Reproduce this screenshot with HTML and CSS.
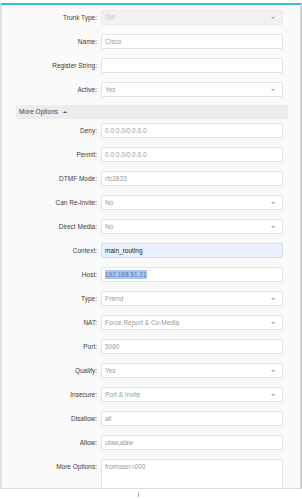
FILE: index.html
```html
<!DOCTYPE html>
<html lang="en">
<head>
    <meta charset="UTF-8">
    <meta name="viewport" content="width=device-width, initial-scale=1.0">
    <title>Edit Trunk</title>
    <link rel="stylesheet" href="styles.css">
</head>
<body>
    <div class="modal">
        <div class="modal-body">
            <div class="row">
                <label>Trunk Type:</label>
                <div class="field select disabled"><span>SIP</span><i class="caret"></i></div>
            </div>
            <div class="row">
                <label>Name:</label>
                <div class="field"><span>Cisco</span></div>
            </div>
            <div class="row">
                <label>Register String:</label>
                <div class="field"></div>
            </div>
            <div class="row">
                <label>Active:</label>
                <div class="field select"><span>Yes</span><i class="caret"></i></div>
            </div>

            <!-- Дополнительные настройки -->
            <div class="more-bar">More Options <i class="caret-up"></i></div>

            <div class="row">
                <label>Deny:</label>
                <div class="field"><span>0.0.0.0/0.0.0.0</span></div>
            </div>
            <div class="row">
                <label>Permit:</label>
                <div class="field"><span>0.0.0.0/0.0.0.0</span></div>
            </div>
            <div class="row">
                <label>DTMF Mode:</label>
                <div class="field"><span>rfc2833</span></div>
            </div>
            <div class="row">
                <label>Can Re-Invite:</label>
                <div class="field select"><span>No</span><i class="caret"></i></div>
            </div>
            <div class="row">
                <label>Direct Media:</label>
                <div class="field select"><span>No</span><i class="caret"></i></div>
            </div>
            <div class="row">
                <label>Context:</label>
                <div class="field autofill"><span>main_routing</span></div>
            </div>
            <div class="row">
                <label>Host:</label>
                <div class="field"><span class="selected">192.168.51.21</span></div>
            </div>
            <div class="row">
                <label>Type:</label>
                <div class="field select"><span>Friend</span><i class="caret"></i></div>
            </div>
            <div class="row">
                <label>NAT:</label>
                <div class="field select"><span>Force Report &amp; Co-Media</span><i class="caret"></i></div>
            </div>
            <div class="row">
                <label>Port:</label>
                <div class="field"><span>5060</span></div>
            </div>
            <div class="row">
                <label>Qualify:</label>
                <div class="field select"><span>Yes</span><i class="caret"></i></div>
            </div>
            <div class="row">
                <label>Insecure:</label>
                <div class="field select"><span>Port &amp; Invite</span><i class="caret"></i></div>
            </div>
            <div class="row">
                <label>Disallow:</label>
                <div class="field"><span>all</span></div>
            </div>
            <div class="row">
                <label>Allow:</label>
                <div class="field"><span>ulaw,alaw</span></div>
            </div>
            <div class="row">
                <label>More Options:</label>
                <div class="field textarea"><span>fromuser=000</span></div>
            </div>
        </div>
    </div>
    <div class="cursor-mark"></div>
</body>
</html>
```

FILE: styles.css
```css
body {
    margin: 0;
    background: #fff;
    font-family: "Liberation Sans", Arial, sans-serif;
    font-size: 6.5px;
    color: #444;
}
.modal {
    margin-top: 3px;
    width: 302px;
    height: 486px;
    box-sizing: border-box;
    border-top: 2px solid #35bfd6;
    border-left: 2px solid #dfe2e4;
    border-right: 2px solid #d2d2d2;
    border-bottom: 1px solid #dcdcdc;
    background: #fafafa;
    overflow: hidden;
}
.modal-body {
    padding-top: 5px;
}
.row {
    display: grid;
    grid-template-columns: 95px 182px;
    column-gap: 4px;
    align-items: start;
    margin-bottom: 9px;
}
.row label {
    text-align: right;
    line-height: 15px;
    color: #3a3a3a;
}
.field {
    height: 15px;
    box-sizing: border-box;
    border: 1px solid #e2e2e2;
    border-radius: 2px;
    background: #fff;
    padding: 0 7px 0 3px;
    display: flex;
    align-items: center;
    justify-content: space-between;
    color: #9a9a9a;
}
.field.disabled {
    background: #f1f1f1;
    border-color: #e8e8e8;
    color: #c8c8c8;
}
.field.autofill {
    background: #e8f0fe;
    border-color: #d6dbe4;
    color: #222;
}
.field.textarea {
    height: 60px;
    align-items: flex-start;
    padding-top: 3px;
}
.selected {
    background: #a8c8f4;
    color: #5878a6;
    padding: 1px 0;
}
.caret {
    width: 0;
    height: 0;
    border-left: 2px solid transparent;
    border-right: 2px solid transparent;
    border-top: 2px solid #a8a8a8;
}
.more-bar {
    margin: -1px 12px 4px 14px;
    height: 14px;
    line-height: 14px;
    padding-left: 3px;
    background: #ececec;
    color: #444;
}
.caret-up {
    display: inline-block;
    vertical-align: middle;
    margin-left: 3px;
    margin-top: -1px;
    width: 0;
    height: 0;
    border-left: 2px solid transparent;
    border-right: 2px solid transparent;
    border-bottom: 2px solid #555;
}
.cursor-mark {
    width: 1px;
    height: 5px;
    margin: 3px 0 0 138px;
    background: #bbb;
}
```
